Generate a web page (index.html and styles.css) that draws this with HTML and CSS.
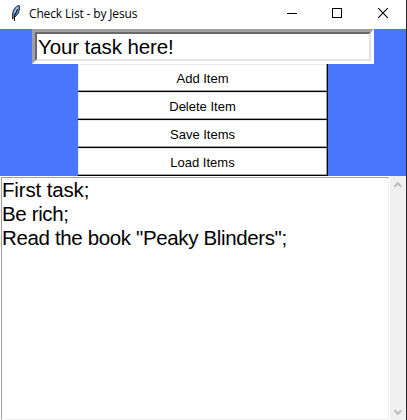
FILE: index.html
```
<!DOCTYPE html>
<html lang="en">
<head>
<meta charset="utf-8">
<title>Check List - by Jesus</title>
<link rel="stylesheet" href="styles.css">
</head>
<body>
<div class="window">
  <header class="titlebar">
    <svg class="feather" width="16" height="18" viewBox="0 0 16 18">
      <path d="M4.5 15V10L5.5 6L8.5 2.5L11 1.2L11.7 4L10.5 9L7 13Z" fill="#4b86c8" stroke="#333" stroke-width="1"/>
      <path d="M6.3 9L9.8 3" stroke="#a9cdf2" stroke-width="1.5"/>
      <path d="M6.5 17V12L9.5 5" fill="none" stroke="#151515" stroke-width="1"/>
    </svg>
    <span class="title">Check List - by Jesus</span>
    <div class="controls">
      <svg width="45" height="29" viewBox="0 0 45 29" shape-rendering="crispEdges"><path d="M17 13.5h10" stroke="#000"/></svg>
      <svg width="45" height="29" viewBox="0 0 45 29" shape-rendering="crispEdges"><path d="M17.5 8.5h9v9h-9z" fill="none" stroke="#000"/></svg>
      <svg width="46" height="29" viewBox="0 0 46 29"><path d="M18.2 8.2l9.6 9.6M27.8 8.2l-9.6 9.6" stroke="#000" stroke-width="1.1"/></svg>
    </div>
  </header>
  <main class="panel">
    <div class="entry"><div class="entry-inner">Your task here!</div></div>
    <div class="buttons">
      <button>Add Item</button>
      <button>Delete Item</button>
      <button>Save Items</button>
      <button>Load Items</button>
    </div>
  </main>
  <section class="list">
    <div class="items">
      <div class="first">First task;</div>
      <div>Be rich;</div>
      <div>Read the book "Peaky Blinders";</div>
    </div>
    <div class="scrollbar">
      <svg width="16" height="16" viewBox="0 0 16 16"><path d="M4.3 10.8L7.8 7.3L11.3 10.8" fill="none" stroke="#bfbfbf" stroke-width="2.2"/></svg>
      <svg width="16" height="16" viewBox="0 0 16 16"><path d="M4.3 6.2L7.8 9.7L11.3 6.2" fill="none" stroke="#bfbfbf" stroke-width="2.2"/></svg>
    </div>
  </section>
</div>
</body>
</html>
```
FILE: styles.css
```
* { box-sizing: border-box; }
body { margin: 0; overflow: hidden; background: #fff; color: #000; font-family: "Liberation Sans", Arial, sans-serif; }
.window { width: 407px; height: 420px; display: flex; flex-direction: column; border-right: 1px solid #23252b; }
.titlebar { height: 29px; display: flex; align-items: center; padding-left: 8px; }
.feather { margin: -3px 5px 0 0; }
.title { font: 12px/16px "Open Sans", sans-serif; letter-spacing: -0.15px; margin-top: -2px; white-space: nowrap; }
.controls { display: flex; margin-left: auto; }
.controls svg { display: block; }
.panel { height: 147px; background: #4876ff; display: flex; flex-direction: column; align-items: center; }
.entry { width: 342px; height: 35px; border: 3px solid; border-color: #a0a0a0 #fff #fff #a0a0a0; }
.entry-inner { height: 29px; border: 2px solid; border-color: #696969 #e3e3e3 #e3e3e3 #696969; background: #fff; font-size: 20.5px; letter-spacing: -0.1px; line-height: 26px; padding-left: 1px; white-space: nowrap; }
.buttons { width: 250px; display: flex; flex-direction: column; }
.buttons button { height: 28px; padding: 1px 0 0; background: #fff; border: solid #000; border-width: 0 1px 1px 0; border-radius: 0; box-shadow: inset -1px -1px #a0a0a0, inset 1px 1px #e9e9e9; font: 13px/25px "Liberation Sans", Arial, sans-serif; color: #000; }
.list { flex: 1; display: flex; }
.items { width: 388px; margin: 1px 0 0 1px; border: 1px solid; border-color: #a0a0a0 #f0f0f0 #f0f0f0 #a0a0a0; font-size: 20.5px; letter-spacing: -0.36px; line-height: 24px; white-space: nowrap; }
.first { letter-spacing: -0.15px; }
.scrollbar { width: 16px; margin-left: auto; background: #f0f0f0; display: flex; flex-direction: column; justify-content: space-between; }
.scrollbar svg { display: block; }
```
